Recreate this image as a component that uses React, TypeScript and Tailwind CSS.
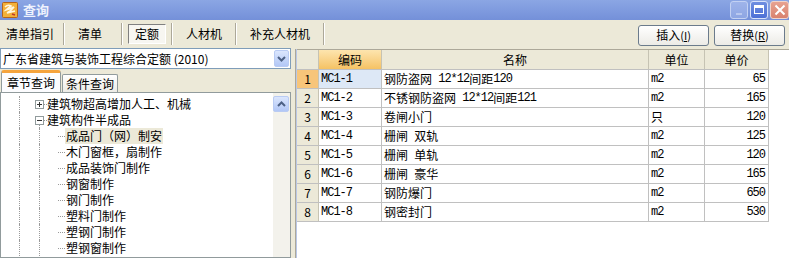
import { type ReactNode } from "react";

type Row = { no: number; code: string; name: string; unit: string; price: string };

const rows: Row[] = [
  { no: 1, code: "MC1-1", name: "钢防盗网 12*12间距120", unit: "m2", price: "65" },
  { no: 2, code: "MC1-2", name: "不锈钢防盗网 12*12间距121", unit: "m2", price: "165" },
  { no: 3, code: "MC1-3", name: "卷闸小门", unit: "只", price: "120" },
  { no: 4, code: "MC1-4", name: "栅闸 双轨", unit: "m2", price: "125" },
  { no: 5, code: "MC1-5", name: "栅闸 单轨", unit: "m2", price: "120" },
  { no: 6, code: "MC1-6", name: "栅闸 豪华", unit: "m2", price: "165" },
  { no: 7, code: "MC1-7", name: "钢防爆门", unit: "m2", price: "650" },
  { no: 8, code: "MC1-8", name: "钢密封门", unit: "m2", price: "530" },
];

const children = [
  "成品门（网）制安",
  "木门窗框，扇制作",
  "成品装饰门制作",
  "钢窗制作",
  "钢门制作",
  "塑料门制作",
  "塑钢门制作",
  "塑钢窗制作",
];

// ascii runs in a narrow mono face, like the old bitmap font
function Mixed({ text }: { text: string }) {
  const parts = text.match(/[\x20-\x7e]+|[^\x20-\x7e]+/g) ?? [];
  return (
    <>
      {parts.map((p, i) =>
        /^[\x20-\x7e]+$/.test(p) ? (
          <span key={i} className="whitespace-pre font-['Liberation_Mono',monospace] text-[12px] tracking-[-1px]">
            {p}
          </span>
        ) : (
          <span key={i}>{p}</span>
        ),
      )}
    </>
  );
}

function Sep() {
  return <div className="mx-[5px] h-[22px] w-[2px] border-l border-[#aca899] border-r border-r-white" />;
}

function ToolTab({ label, pressed }: { label: string; pressed?: boolean }) {
  if (pressed) {
    return (
      <div className="flex h-[20px] items-center border border-t-[#808080] border-l-[#808080] border-r-white border-b-white bg-[#f7f6f1] px-[6px]">
        {label}
      </div>
    );
  }
  return <div className="flex h-[20px] items-center px-[4px]">{label}</div>;
}

function XpButton({ label, hot }: { label: string; hot: string }) {
  return (
    <button
      type="button"
      className="flex h-[21px] w-[71px] items-center justify-center rounded-[3px] border border-[#6b7b8c] bg-gradient-to-b from-white to-[#ecebe6] text-[12px]"
    >
      {label}
      <span className="text-[11px]">
        (<span className="underline">{hot}</span>)
      </span>
    </button>
  );
}

function Expander({ open }: { open: boolean }) {
  return (
    <div className="absolute left-[33px] top-[4px] flex h-[9px] w-[9px] items-center justify-center border border-[#919b9c] bg-white">
      <div className="h-[1px] w-[5px] bg-[#333]" />
      {!open && <div className="absolute h-[5px] w-[1px] bg-[#333]" />}
    </div>
  );
}

function TreeRow({ children: label, level, open, selected }: { children: ReactNode; level: 1 | 2; open?: boolean; selected?: boolean }) {
  return (
    <div className="relative h-[16px]">
      <div className="absolute left-[17px] top-0 h-[16px] border-l border-dotted border-[#9a9a9a]" />
      {level === 1 ? (
        <>
          <Expander open={!!open} />
          <div className="absolute left-[42px] top-[8px] w-[3px] border-t border-dotted border-[#9a9a9a]" />
          {open && <div className="absolute left-[37px] top-[13px] h-[3px] border-l border-dotted border-[#9a9a9a]" />}
          <span className="absolute left-[45px] top-0 whitespace-nowrap leading-[16px]">{label}</span>
        </>
      ) : (
        <>
          <div className="absolute left-[37px] top-0 h-[16px] border-l border-dotted border-[#9a9a9a]" />
          <div className="absolute left-[56px] top-[8px] w-[7px] border-t border-dotted border-[#9a9a9a]" />
          <span className={`absolute left-[63px] top-0 whitespace-nowrap px-[1px] leading-[16px] ${selected ? "bg-[#ece9d8]" : ""}`}>{label}</span>
        </>
      )}
    </div>
  );
}

export default function App() {
  return (
    <div className="flex h-[258px] w-[789px] flex-col overflow-hidden bg-[#ece9d8] font-['Noto_Sans_CJK_SC',sans-serif] text-[12px] text-black">
      {/* title bar */}
      <div className="flex h-[20px] shrink-0 items-center bg-gradient-to-b from-[#8ba6e4] to-[#7490d9] pl-[2px]">
        <svg width="16" height="16" viewBox="0 0 16 16">
          <rect x="0.5" y="0.5" width="15" height="15" rx="1" fill="#f3b13a" stroke="#b5631a" />
          <path d="M3 5 Q6 2 9 4 Q6 6 4 8 Q8 7 12 5 Q9 9 5 11 Q9 10 13 9" stroke="#fff7e0" strokeWidth="1.6" fill="none" />
          <path d="M10 12 L13 13" stroke="#c0392b" strokeWidth="1.5" />
        </svg>
        <span className="ml-[5px] text-[13px] font-bold text-[#eef2fd]">查询</span>
        <div className="ml-auto flex h-[19px] items-start gap-[2px]">
          <div className="flex h-[18px] w-[18px] items-end justify-center rounded-[3px] border border-[#c3d1f3] bg-gradient-to-b from-[#9fb4ea] to-[#8ea6e3] pb-[3px]">
            <div className="h-[2px] w-[6px] bg-[#b9c8ef]" />
          </div>
          <div className="flex h-[18px] w-[18px] items-center justify-center rounded-[3px] border border-[#d8e2fa] bg-gradient-to-b from-[#6f8ee0] to-[#4d70d6]">
            <div className="h-[9px] w-[10px] border border-t-[3px] border-white" />
          </div>
          <div className="flex h-[18px] w-[19px] items-center justify-center rounded-[3px] border border-[#f0d3cb] bg-gradient-to-b from-[#e7a291] to-[#d9826e]">
            <svg width="12" height="12" viewBox="0 0 12 12">
              <path d="M1.5 1.5 L10.5 10.5 M10.5 1.5 L1.5 10.5" stroke="#fff" strokeWidth="2" />
            </svg>
          </div>
        </div>
      </div>

      {/* toolbar */}
      <div className="flex h-[28px] shrink-0 items-center pl-[2px] pr-[4px]">
        <ToolTab label="清单指引" />
        <Sep />
        <div className="w-[4px]" />
        <ToolTab label="清单" />
        <div className="w-[10px]" />
        <Sep />
        <ToolTab label="定额" pressed />
        <Sep />
        <div className="w-[4px]" />
        <ToolTab label="人材机" />
        <div className="w-[4px]" />
        <Sep />
        <div className="w-[4px]" />
        <ToolTab label="补充人材机" />
        <div className="w-[4px]" />
        <Sep />
        <div className="ml-auto flex items-center gap-[5px] pt-[2px]">
          <XpButton label="插入" hot="I" />
          <XpButton label="替换" hot="R" />
        </div>
      </div>

      {/* body */}
      <div className="flex min-h-0 flex-1">
        {/* left */}
        <div className="flex w-[291px] shrink-0 flex-col">
          <div className="flex h-[21px] items-center border border-[#7f9db9] bg-white pl-[2px]">
            <span className="flex-1 whitespace-nowrap">广东省建筑与装饰工程综合定额 (2010)</span>
            <div className="mr-[1px] flex h-[17px] w-[15px] items-center justify-center rounded-[2px] border border-[#b9cbf3] bg-gradient-to-b from-[#dbe6fd] to-[#b2c7f6]">
              <svg width="9" height="6" viewBox="0 0 9 6">
                <path d="M1 1 L4.5 4.5 L8 1" stroke="#4d6185" strokeWidth="2" fill="none" />
              </svg>
            </div>
          </div>
          <div className="mt-[1px] flex h-[22px] items-end pl-[1px]">
            <div className="relative z-10 flex h-[22px] w-[60px] items-center justify-center rounded-t-[3px] border border-b-0 border-[#919b9c] border-t-[3px] border-t-[#f5a43d] bg-[#fcfcfe]">
              章节查询
            </div>
            <div className="ml-[1px] flex h-[18px] w-[56px] items-center justify-center rounded-t-[2px] border border-b-0 border-[#919b9c] bg-gradient-to-b from-white to-[#ecebe5]">
              条件查询
            </div>
          </div>
          <div className="relative flex min-h-0 flex-1 border border-[#919b9c] bg-white pl-[1px]">
            <div className="flex-1 pt-[3px]">
              <TreeRow level={1}>建筑物超高增加人工、机械</TreeRow>
              <TreeRow level={1} open>建筑构件半成品</TreeRow>
              {children.map((c, i) => (
                <TreeRow key={c} level={2} selected={i === 0}>
                  {c}
                </TreeRow>
              ))}
            </div>
            <div className="flex w-[17px] flex-col bg-[#f3f2ec] pt-[3px]">
              <div className="flex h-[16px] w-[16px] items-center justify-center rounded-[2px] border border-[#b9cbf3] bg-gradient-to-b from-[#dbe6fd] to-[#b2c7f6]">
                <svg width="9" height="6" viewBox="0 0 9 6">
                  <path d="M1 5 L4.5 1.5 L8 5" stroke="#4d6185" strokeWidth="2" fill="none" />
                </svg>
              </div>
            </div>
          </div>
        </div>

        {/* splitter */}
        <div className="w-[4px] shrink-0" />
        <div className="mt-[1px] w-[2px] shrink-0 border-l border-[#aca899] border-r border-r-[#b9c7e6]" />

        {/* grid */}
        <div className="mt-[1px] min-w-0 flex-1 border-t border-[#aca899] bg-white">
          <div className="flex h-[20px] w-[472px] border-b border-[#c0c0c0]">
            <div className="w-[22px] shrink-0 border-r border-[#c6c3b3] bg-[#ece9d8]" />
            <div className="flex w-[63px] shrink-0 items-center justify-center border-r border-[#c6c3b3] bg-gradient-to-b from-[#fde5ae] to-[#f5c263]">编码</div>
            <div className="flex w-[267px] shrink-0 items-center justify-center border-r border-[#c6c3b3] bg-[#ece9d8]">名称</div>
            <div className="flex w-[56px] shrink-0 items-center justify-center border-r border-[#c6c3b3] bg-[#ece9d8]">单位</div>
            <div className="flex w-[64px] shrink-0 items-center justify-center border-r border-[#c6c3b3] bg-[#ece9d8]">单价</div>
          </div>
          {rows.map((r) => (
            <div key={r.no} className="flex h-[19px] w-[472px] border-b border-[#c0c0c0]">
              <div className={`flex w-[22px] shrink-0 items-center justify-center border-r border-[#c6c3b3] ${r.no === 1 ? "bg-[#f7c57a]" : "bg-[#ece9d8]"}`}>{r.no}</div>
              <div className={`flex w-[63px] shrink-0 items-center border-r border-[#c0c0c0] pl-[2px] ${r.no === 1 ? "bg-[#dde8f6]" : ""}`}>
                <Mixed text={r.code} />
              </div>
              <div className="flex w-[267px] shrink-0 items-center whitespace-nowrap border-r border-[#c0c0c0] pl-[2px]">
                <Mixed text={r.name} />
              </div>
              <div className="flex w-[56px] shrink-0 items-center border-r border-[#c0c0c0] pl-[2px]">
                <Mixed text={r.unit} />
              </div>
              <div className="flex w-[64px] shrink-0 items-center justify-end border-r border-[#c0c0c0] pr-[3px]">
                <Mixed text={r.price} />
              </div>
            </div>
          ))}
        </div>
      </div>
    </div>
  );
}
